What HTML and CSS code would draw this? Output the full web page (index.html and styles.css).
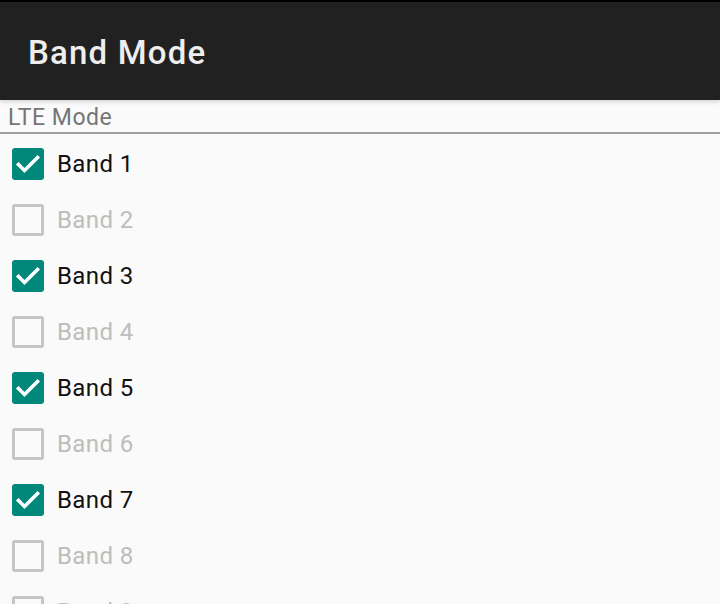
FILE: index.html
```html
<!DOCTYPE html>
<html>
<head>
<meta charset="utf-8">
<link rel="stylesheet" href="styles.css">
</head>
<body>
<header class="appbar"><h1 class="title">Band Mode</h1></header>
<main class="content">
  <div class="section-label">LTE Mode</div>
  <div class="divider"></div>
  <ul class="bands">
    <li class="band on"><span class="box"><svg viewBox="0 0 32 32" width="32" height="32"><polyline points="6.5,16.5 12.5,22.5 25.5,9.5" fill="none" stroke="#fff" stroke-width="3.6" stroke-linecap="square"/></svg></span><span class="label">Band 1</span></li>
    <li class="band"><span class="box"></span><span class="label">Band 2</span></li>
    <li class="band on"><span class="box"><svg viewBox="0 0 32 32" width="32" height="32"><polyline points="6.5,16.5 12.5,22.5 25.5,9.5" fill="none" stroke="#fff" stroke-width="3.6" stroke-linecap="square"/></svg></span><span class="label">Band 3</span></li>
    <li class="band"><span class="box"></span><span class="label">Band 4</span></li>
    <li class="band on"><span class="box"><svg viewBox="0 0 32 32" width="32" height="32"><polyline points="6.5,16.5 12.5,22.5 25.5,9.5" fill="none" stroke="#fff" stroke-width="3.6" stroke-linecap="square"/></svg></span><span class="label">Band 5</span></li>
    <li class="band"><span class="box"></span><span class="label">Band 6</span></li>
    <li class="band on"><span class="box"><svg viewBox="0 0 32 32" width="32" height="32"><polyline points="6.5,16.5 12.5,22.5 25.5,9.5" fill="none" stroke="#fff" stroke-width="3.6" stroke-linecap="square"/></svg></span><span class="label">Band 7</span></li>
    <li class="band"><span class="box"></span><span class="label">Band 8</span></li>
    <li class="band"><span class="box"></span><span class="label">Band 9</span></li>
  </ul>
</main>
</body>
</html>
```
FILE: styles.css
```css
html, body {
  margin: 0;
  padding: 0;
  background: #fafafa;
  font-family: Roboto, "Noto Sans", sans-serif;
  overflow: hidden;
  height: 604px;
}
.appbar {
  height: 98px;
  background: #212121;
  border-top: 2px solid #000;
  display: flex;
  align-items: center;
  padding-left: 28px;
  box-shadow: 0 2px 4px rgba(0,0,0,0.15);
  position: relative;
  z-index: 1;
}
.title {
  margin: 0;
  font-size: 33px;
  font-weight: 500;
  color: #eeeeee;
  letter-spacing: 1.2px;
  padding-top: 2px;
}
.section-label {
  height: 30px;
  line-height: 32px;
  padding-top: 2px;
  padding-left: 8px;
  font-size: 23px;
  letter-spacing: 0.5px;
  color: #757575;
}
.divider {
  height: 2px;
  background: #9e9e9e;
}
.bands {
  list-style: none;
  margin: 2px 0 0;
  padding: 0;
}
.band {
  height: 56px;
  display: flex;
  align-items: center;
  padding-left: 12px;
}
.box {
  width: 32px;
  height: 32px;
  box-sizing: border-box;
  border: 3px solid #c4c4c4;
  border-radius: 3px;
  margin-right: 13px;
  display: flex;
  position: relative;
}
.band.on .box {
  background: #00897b;
  border: none;
}
.label {
  font-size: 24px;
  letter-spacing: 0.4px;
  color: #bdbdbd;
}
.band.on .label {
  color: #111;
}
```
